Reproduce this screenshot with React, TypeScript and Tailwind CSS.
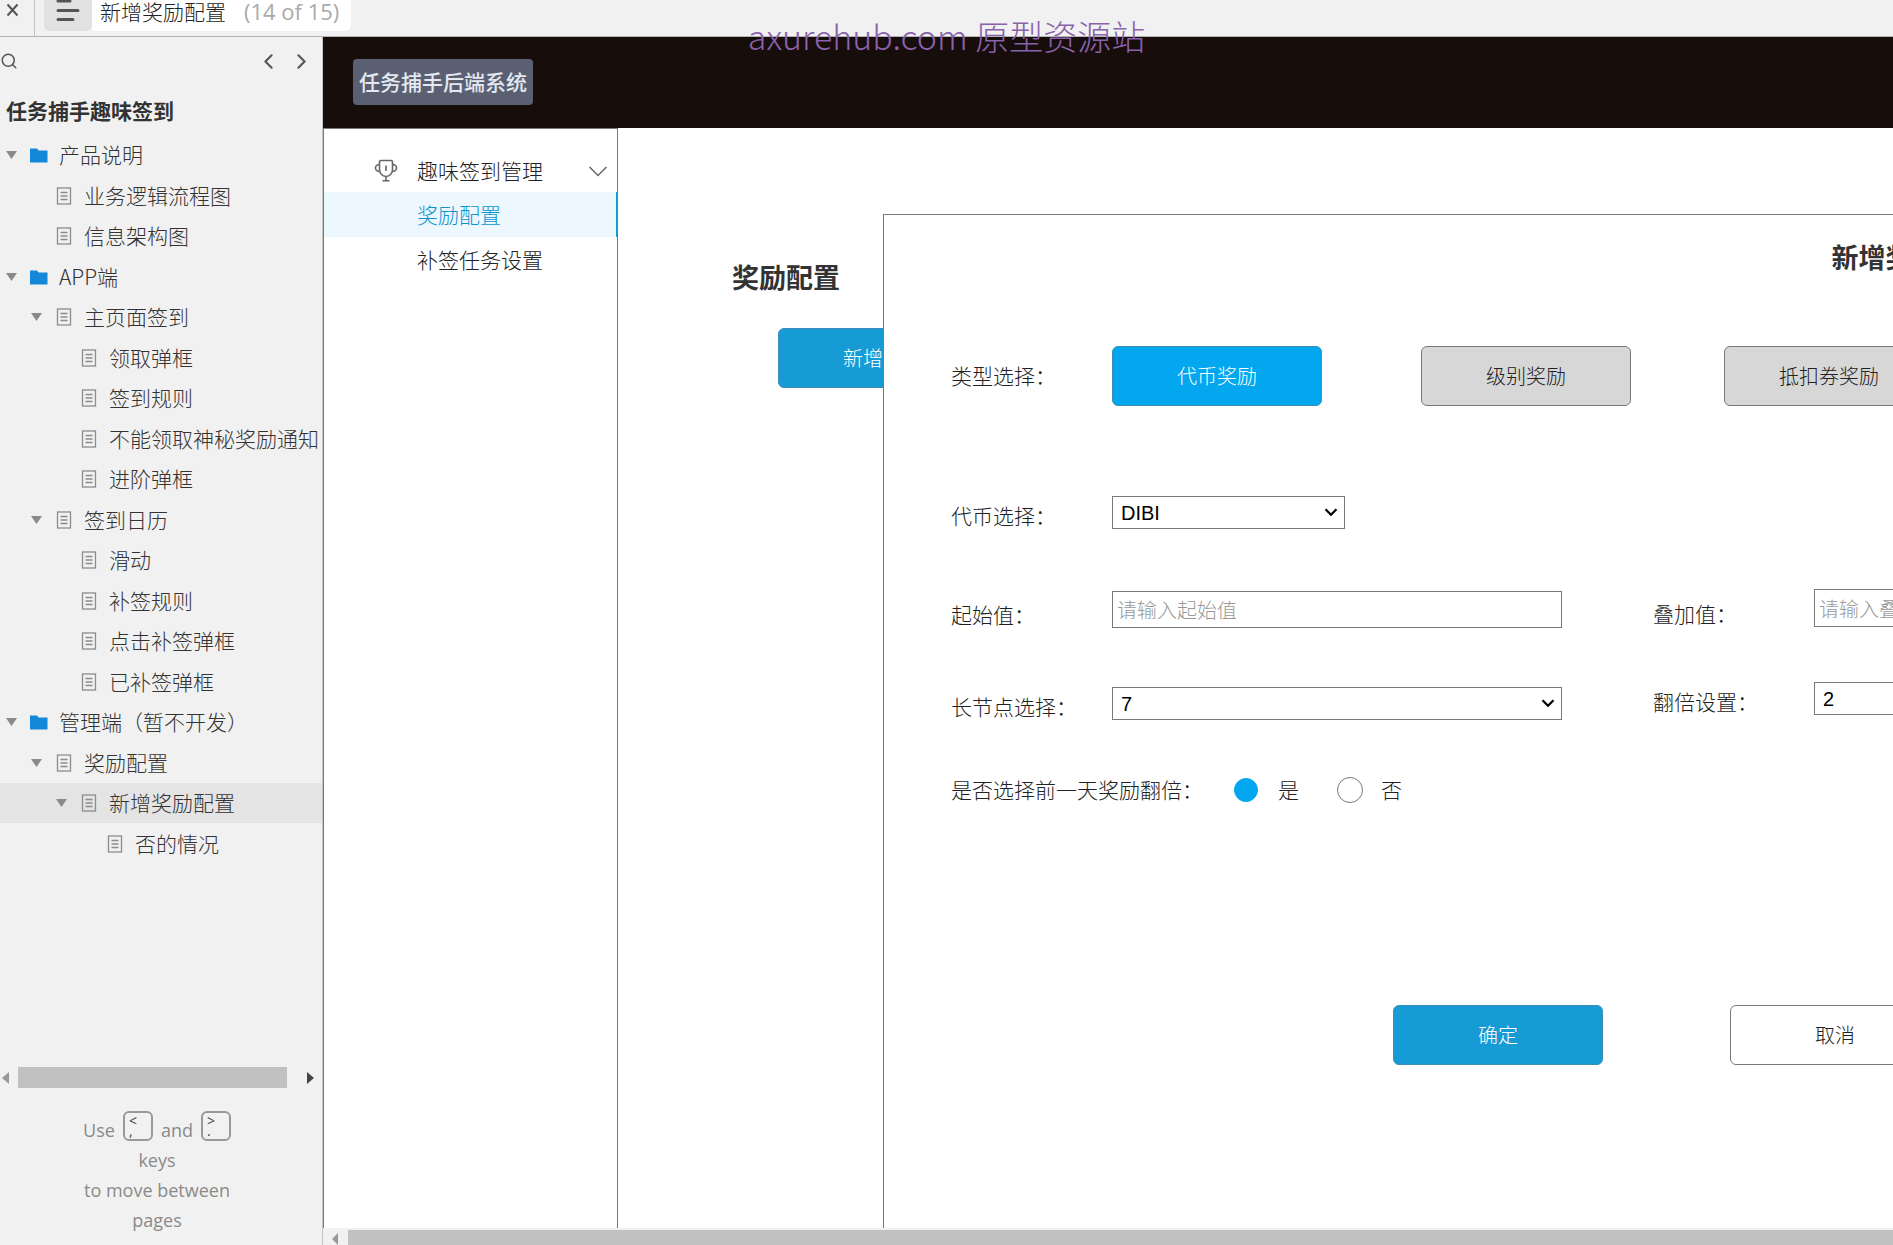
import type { ReactNode } from "react"
import { ChevronLeft, ChevronRight, Search } from "lucide-react"

type TreeItem = { label: string; level: number; folder?: boolean; open?: boolean; active?: boolean }

const pages: TreeItem[] = [
  { label: "产品说明", level: 0, folder: true, open: true },
  { label: "业务逻辑流程图", level: 1 },
  { label: "信息架构图", level: 1 },
  { label: "APP端", level: 0, folder: true, open: true },
  { label: "主页面签到", level: 1, open: true },
  { label: "领取弹框", level: 2 },
  { label: "签到规则", level: 2 },
  { label: "不能领取神秘奖励通知", level: 2 },
  { label: "进阶弹框", level: 2 },
  { label: "签到日历", level: 1, open: true },
  { label: "滑动", level: 2 },
  { label: "补签规则", level: 2 },
  { label: "点击补签弹框", level: 2 },
  { label: "已补签弹框", level: 2 },
  { label: "管理端（暂不开发）", level: 0, folder: true, open: true },
  { label: "奖励配置", level: 1, open: true },
  { label: "新增奖励配置", level: 2, open: true, active: true },
  { label: "否的情况", level: 3 },
]

const indents = ["pl-1.5", "pl-[31px]", "pl-14", "pl-[82px]"]

function FolderIcon() {
  return (
    <svg width="18" height="16" viewBox="0 0 18 16" className="shrink-0">
      <path d="M0 1.5h7l1.5 2H17.5V15.5H0z" fill="#1587d9" />
    </svg>
  )
}

function PageIcon() {
  return (
    <svg width="18" height="18" viewBox="0 0 18 18" className="shrink-0" fill="none" stroke="#8c8c8c">
      <rect x="2.5" y="1" width="13" height="16" strokeWidth="1.3" />
      <path d="M5.5 5.5h7M5.5 9h7M5.5 12.5h7" strokeWidth="1.3" />
    </svg>
  )
}

function Caret() {
  return (
    <svg width="11" height="8" viewBox="0 0 11 8">
      <path d="M0 0h11L5.5 8z" fill="#8a8a8a" />
    </svg>
  )
}

function TrophyIcon() {
  return (
    <svg width="24" height="24" viewBox="0 0 24 24" fill="none" stroke="#666" strokeWidth="1.6">
      <path d="M7 1.500h10q1.500 0 1.500 1.500v7.500c0 3.500-2.500 7-6.500 7s-6.500-3.500-6.500-7V3Q5.500 1.500 7 1.500z" />
      <path d="M5.500 5.500C3 5.500 1.500 7.500 1.500 9s1.500 3.500 4.300 3.500M18.500 5.500c2.500 0 4 2 4 3.500s-1.500 3.500-4.300 3.500" />
      <path d="M12 17.500v4M8.500 21.800h7M12 6.500v5.500" />
    </svg>
  )
}

function KeyCap({ top, bottom }: { top: string; bottom: string }) {
  return (
    <kbd className="flex h-[30px] w-[30px] flex-col rounded-md border-2 border-[#999] pl-1 font-['Open_Sans',sans-serif] text-sm leading-3 text-[#444]">
      <span className="pt-0.5">{top}</span>
      <span className="leading-[8px]">{bottom}</span>
    </kbd>
  )
}

function SelectBox({ id, value, className }: { id: string; value: string; className: string }) {
  return (
    <div className={`relative ${className}`}>
      <select
        id={id}
        defaultValue={value}
        className="block h-[33px] w-full appearance-none border border-[#797979] bg-white pl-2 font-['Liberation_Sans',sans-serif] text-xl leading-7 text-black"
      >
        <option>{value}</option>
      </select>
      <svg className="pointer-events-none absolute top-3 right-[7px]" width="14" height="9" viewBox="0 0 14 9">
        <path d="M1.500 1.200L7 6.800l5.500-5.600" fill="none" stroke="#000" strokeWidth="2.200" />
      </svg>
    </div>
  )
}

function FieldRow({ id, label, children }: { id: string; label: string; children: ReactNode }) {
  return (
    <div className="flex items-end">
      <label htmlFor={id} className="w-[161px] shrink-0 leading-7">
        {label}
      </label>
      {children}
    </div>
  )
}

const button = "h-[60px] w-[210px] shrink-0 rounded-md border text-xl"
const textBox = "w-[450px] border border-[#797979] bg-white px-1 text-xl font-light placeholder:text-[#999]"

function Sidebar() {
  return (
    <aside className="flex w-[323px] shrink-0 flex-col border-r border-[#c4c4c4] bg-[#f1f1f1] text-[#333]">
      <div className="flex h-12 items-center justify-between pr-2">
        <button aria-label="搜索" className="text-[#555]">
          <Search size={18} strokeWidth={2} />
        </button>
        <div className="flex gap-2 text-[#555]">
          <button aria-label="上一页">
            <ChevronLeft size={25} strokeWidth={2} />
          </button>
          <button aria-label="下一页">
            <ChevronRight size={25} strokeWidth={2} />
          </button>
        </div>
      </div>
      <h1 className="h-[50px] pl-1.5 text-[21px] leading-[50px] font-bold">任务捕手趣味签到</h1>

      <ul>
        {pages.map((p) => (
          <li key={p.label + p.level} className="odd:h-10 even:h-[41px]">
            <a
              href="#"
              className={`flex h-full items-center text-[21px] whitespace-nowrap ${indents[p.level]} ${p.active ? "bg-[#e4e4e4]" : ""}`}
            >
              <span className="w-6 shrink-0">{p.open && <Caret />}</span>
              {p.folder ? <FolderIcon /> : <PageIcon />}
              <span className="pl-[11px]">{p.label}</span>
            </a>
          </li>
        ))}
      </ul>

      <div className="mt-auto flex h-[21px] items-center pr-2 pl-0.5">
        <svg width="7" height="12" viewBox="0 0 7 12">
          <path d="M7 0v12L0 6z" fill="#999" />
        </svg>
        <div className="mr-5 ml-[9px] h-full flex-1 bg-[#c1c1c1]" />
        <svg width="7" height="12" viewBox="0 0 7 12">
          <path d="M0 0v12l7-6z" fill="#444" />
        </svg>
      </div>
      <div className="mt-[27px] flex flex-col items-center pr-2 pb-2.5 font-['Open_Sans',sans-serif] text-lg leading-[30px] font-normal text-[#8a8a8a]">
        <div className="flex items-start gap-2">
          <span>Use</span>
          <div className="-mt-1">
            <KeyCap top="<" bottom="," />
          </div>
          <span>and</span>
          <div className="-mt-1">
            <KeyCap top=">" bottom="." />
          </div>
        </div>
        <span>keys</span>
        <span>to move between</span>
        <span>pages</span>
      </div>
    </aside>
  )
}

function RewardDialog() {
  return (
    <section className="absolute top-[86px] bottom-0 left-[265px] w-[2060px] border-t border-l border-[#797979] bg-white pt-6 pl-[67px]">
      <h2 className="pr-[69px] text-center text-[27px] leading-9 font-bold text-[#333]">新增奖励配置</h2>

      <div className="mt-[71px] flex items-center">
        <span className="w-[161px] shrink-0">类型选择：</span>
        <button className={`${button} border-[#3d8db8] bg-[#02a7f0] text-white`}>代币奖励</button>
        <button className={`${button} ml-[99px] border-[#797979] bg-[#d7d7d7]`}>级别奖励</button>
        <button className={`${button} ml-[93px] border-[#797979] bg-[#d7d7d7]`}>抵扣券奖励</button>
      </div>

      <div className="mt-[90px]">
        <FieldRow id="coin" label="代币选择：">
          <SelectBox id="coin" value="DIBI" className="w-[233px]" />
        </FieldRow>
      </div>

      <div className="mt-[60px] flex gap-[91px]">
        <div className="flex flex-col gap-[59px] pt-0.5">
          <FieldRow id="start" label="起始值：">
            <input id="start" type="text" placeholder="请输入起始值" className={`h-[37px] ${textBox}`} />
          </FieldRow>
          <FieldRow id="node" label="长节点选择：">
            <SelectBox id="node" value="7" className="w-[450px]" />
          </FieldRow>
        </div>
        <div className="flex flex-col gap-[55px]">
          <FieldRow id="step" label="叠加值：">
            <input id="step" type="text" placeholder="请输入叠加值" className={`h-[38px] ${textBox}`} />
          </FieldRow>
          <FieldRow id="times" label="翻倍设置：">
            <SelectBox id="times" value="2" className="w-[450px]" />
          </FieldRow>
        </div>
      </div>

      <div role="radiogroup" aria-labelledby="double" className="mt-14 flex h-7 items-center">
        <span id="double" className="w-[283px]">
          是否选择前一天奖励翻倍：
        </span>
        <label className="flex w-[103px] items-center gap-5">
          <input
            type="radio"
            name="double"
            defaultChecked
            className="size-6 appearance-none rounded-full border border-[#797979] checked:border-[#02a7f0] checked:bg-[#02a7f0]"
          />
          是
        </label>
        <label className="flex items-center gap-[18px]">
          <input
            type="radio"
            name="double"
            className="size-[26px] appearance-none rounded-full border border-[#797979] checked:border-[#02a7f0] checked:bg-[#02a7f0]"
          />
          否
        </label>
      </div>

      <div className="mt-[201px] flex gap-[127px] pl-[442px]">
        <button className={`${button} border-[#3d8db8] bg-[#169bd5] text-white`}>确定</button>
        <button className={`${button} border-[#797979] bg-white`}>取消</button>
      </div>
    </section>
  )
}

export default function App() {
  return (
    <div className="relative flex h-screen flex-col overflow-hidden bg-white font-['Noto_Sans_CJK_SC',sans-serif] text-[21px] font-light text-[#222]">
      <header className="flex h-[37px] shrink-0 border-b border-[#b5b5b5] bg-[#f1f1f1]">
        <button aria-label="关闭" className="w-[35px] border-r border-[#c4c4c4] pb-4 pl-1.5">
          <svg width="14" height="14" viewBox="0 0 14 14">
            <path d="M1.500 1.500l10 11M11.500 1.500l-10 11" stroke="#555" strokeWidth="2" />
          </svg>
        </button>
        <button aria-label="页面" className="ml-[9px] flex h-[31px] w-12 items-start justify-center rounded-b-md bg-[#e1e1e1]">
          <svg width="26" height="23" viewBox="0 0 26 23" stroke="#555" strokeWidth="3" strokeLinecap="round">
            <path d="M3 1h12M3 10.500h20M3 19.500h15" />
          </svg>
        </button>
        <div className="flex h-[31px] gap-[18px] rounded-br-md bg-white px-2 leading-[22px] whitespace-nowrap">
          <span>新增奖励配置</span>
          <span className="pr-1 font-['Open_Sans',sans-serif] text-[22px] font-normal text-[#aaa]">(14 of 15)</span>
        </div>
      </header>

      <div className="flex min-h-0 flex-1">
        <Sidebar />

        <div className="flex min-w-0 flex-1 flex-col">
          <div className="flex h-[91px] shrink-0 items-center bg-[#170d0b] pb-0.5 pl-[30px]">
            <div className="flex h-[46px] w-[180px] items-center justify-center rounded-sm bg-[#5a6072] font-medium text-[#e4e8f0]">
              任务捕手后端系统
            </div>
          </div>

          <div className="flex min-h-0 flex-1">
            <nav className="w-[295px] shrink-0 border border-b-0 border-[#797979] pt-[21px]">
              <button className="flex h-[42px] w-full items-center pl-[50px]">
                <TrophyIcon />
                <span className="pl-[19px]">趣味签到管理</span>
                <svg width="20" height="11" viewBox="0 0 20 11" className="mr-[9px] ml-auto">
                  <path d="M1.500 1L10 9.500 18.500 1" fill="none" stroke="#666" strokeWidth="1.500" />
                </svg>
              </button>
              <a href="#" className="-mr-px flex h-[45px] items-center border-r-2 border-[#169bd5] bg-[#edf8fe] pl-[93px] text-[#0d93d0]">
                奖励配置
              </a>
              <a href="#" className="flex h-[45px] items-center pl-[93px]">
                补签任务设置
              </a>
            </nav>

            <main className="relative min-w-0 flex-1 overflow-hidden pt-[131px] pl-[114px]">
              <h2 className="text-[27px] leading-9 font-bold text-[#333]">奖励配置</h2>
              <button className={`${button} mt-[33px] ml-[46px] border-[#3d8db8] bg-[#169bd5] text-white`}>新增配置</button>
              <RewardDialog />
            </main>
          </div>

          <div className="flex h-[17px] shrink-0 items-end bg-[#f1f1f1] pl-[9px]">
            <svg width="6" height="12" viewBox="0 0 6 12">
              <path d="M6 0v12L0 6z" fill="#999" />
            </svg>
            <div className="ml-2.5 h-[15px] flex-1 bg-[#c1c1c1]" />
          </div>
        </div>
      </div>

      <div className="pointer-events-none absolute inset-x-0 top-[11px] flex justify-center text-[34px] leading-[50px] font-light text-[#8a62ab]">
        axurehub.com 原型资源站
      </div>
    </div>
  )
}
